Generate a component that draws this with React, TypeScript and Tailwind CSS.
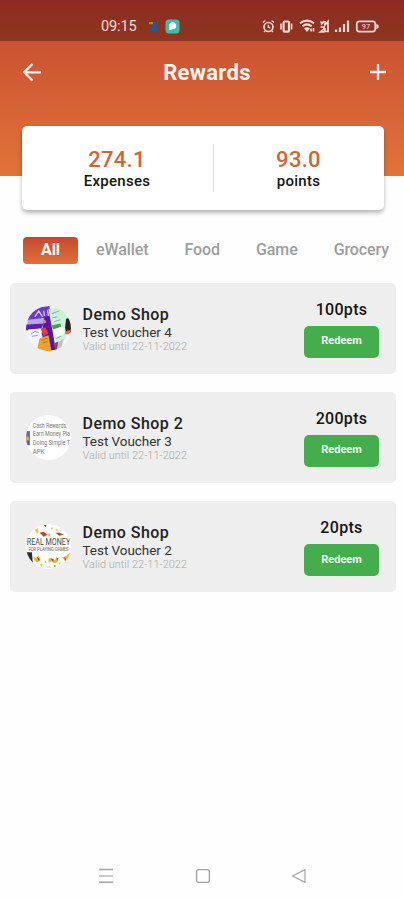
import type { ReactNode } from "react";

interface Reward {
    shop: string;
    voucher: string;
    validUntil: string;
    points: number;
    logo: ReactNode;
}

const categories = ["eWallet", "Food", "Game", "Grocery"];

function FlyerLogo() {
    return (
        <svg viewBox="0 0 46 46" className="size-full">
            <rect width="46" height="46" fill="#f4f6fa" />
            <path d="M4 2L24 0L25 12L1 15Z" fill="#6a3ac4" />
            <path d="M9 11L13 5L17 11M18 5L19 10M22 4L23 10" fill="none" stroke="#d5c5fa" strokeWidth="1.4" />
            <path d="M2 14L20 12L19 18L1 19Z" fill="#b9a6f0" />
            <path d="M0 19L18 18L16 23L0 25Z" fill="#5b1fb4" />
            <path d="M19 11L26 10L30 45L21 46L16 28Z" fill="#541aa7" />
            <path d="M2 24L15 23L14 36L5 38Z" fill="#f5f7ff" />
            <path d="M5 29L9 26L13 27M6 31L12 30" fill="none" stroke="#8f95bd" />
            <path d="M15 23L20 22L23 28L18 31Z" fill="#e5383f" />
            <circle cx="19" cy="16" r="1.6" fill="#f28a2f" />
            <path d="M14 33L23 30L26 46L11 46Z" fill="#f3a02a" />
            <path d="M16 35L22 33M17 38L22 36" stroke="#a8742f" />
            <path d="M23 3L38 1L45 16L40 34L29 36Z" fill="#c9f2d9" />
            <path d="M26 8L34 5M27 12L32 11M29 16L35 14M30 30L37 28M31 33L36 31" stroke="#86b096" />
            <path d="M26 20L35 18L36 21L28 24Z" fill="#4a9f48" />
            <path d="M28 24L38 21L39 29L30 32Z" fill="#f2fdf5" />
            <path d="M41 13L46 12L46 27L41 28L40 22Z" fill="#28201f" />
            <path d="M40 26L46 24L44 29L40 29Z" fill="#e86846" />
            <path d="M29 38L33 36L32 44L30 46Z" fill="#8a4a3a" />
            <path d="M33 37L39 33L36 43L32 45Z" fill="#b9c4c6" />
        </svg>
    );
}

function AppListingLogo() {
    return (
        <svg viewBox="0 0 46 46" className="size-full font-[Roboto,sans-serif]">
            <rect width="46" height="46" fill="#fff" />
            <rect x="0" y="16.5" width="4" height="14.5" fill="#5a6ab0" />
            <rect x="0" y="22" width="3" height="4" fill="#eda143" />
            <g fill="#777" fontSize="7">
                <text x="7" y="12.8" textLength="35" lengthAdjust="spacingAndGlyphs">Cash Rewards,</text>
                <text x="7" y="21.8" textLength="38" lengthAdjust="spacingAndGlyphs">Earn Money Pla</text>
                <text x="7" y="30.8" textLength="38" lengthAdjust="spacingAndGlyphs">Doing Simple T</text>
                <text x="7" y="39.5" textLength="12" lengthAdjust="spacingAndGlyphs">APK</text>
            </g>
        </svg>
    );
}

function RealMoneyLogo() {
    return (
        <svg viewBox="0 0 46 46" className="size-full font-[Roboto,sans-serif]">
            <rect width="46" height="46" fill="#fff" />
            <path d="M9 6l3-2 1 4-2 2zM25 4l3-1-1 3zM30 5l3 1-2 2zM22 11l2-2 1 3-3 1z" fill="#f3c548" />
            <path d="M14 9l4-1 4 3-4 2zM30 9l4 0 5 2-5 1zM18 1l3 0-1 2z" fill="#b5482b" />
            <text x="0.8" y="21.5" textLength="44.4" lengthAdjust="spacingAndGlyphs" fontSize="8.8" fill="#444">REAL MONEY</text>
            <text x="2.5" y="28" textLength="41" lengthAdjust="spacingAndGlyphs" fontSize="4.8" fontWeight="500" fill="#777">FOR PLAYING GAMES</text>
            <path d="M0 29l6 0 1 11-5-5z" fill="#2d2c30" />
            <path d="M7 33l3 2 3-3 2 5-3 2-3-1zM23 35l3 0 3 2 3-2 0 4-3 1-3-2-3 2zM37 34l4-1 4-4-1 7-4 2z" fill="#edb52f" />
            <path d="M11 33l3 3-1 2zM25 35l3 1 0 3zM31 34l2 1-1 3zM19 38l1 0 1 2zM39 33l2 3-1 1zM28 43l2-1 0 2z" fill="#a83926" />
            <path d="M14 41l3 0-1 3zM23 43l3 1-3 1zM33 40l3-1-2 3z" fill="#f5d15b" />
        </svg>
    );
}

const rewards: Reward[] = [
    { shop: "Demo Shop", voucher: "Test Voucher 4", validUntil: "22-11-2022", points: 100, logo: <FlyerLogo /> },
    { shop: "Demo Shop 2", voucher: "Test Voucher 3", validUntil: "22-11-2022", points: 200, logo: <AppListingLogo /> },
    { shop: "Demo Shop", voucher: "Test Voucher 2", validUntil: "22-11-2022", points: 20, logo: <RealMoneyLogo /> },
];

function StatusBar() {
    return (
        <div className="flex h-[41px] items-start bg-linear-to-b from-[#8e2b20] to-[#8f3521] pt-[17px] pl-[101px] text-[#f3dcd6]">
            <span className="h-[19px] w-[47px] text-[14.5px] leading-[20px] tracking-[-0.1px]">09:15</span>
            <svg width="11" height="12" viewBox="0 0 11 12" className="mt-1">
                <path d="M4 1H10V4L7 7H10V10H1V7L5 4Z" fill="#2a5688" />
                <path d="M1 1H5V3.2H1Z" fill="#b07d55" />
            </svg>
            <svg width="15" height="15" viewBox="0 0 15 15" className="mt-[2px] ml-[6px]">
                <rect x="0.5" y="0.5" width="14" height="14" rx="3.5" fill="#3dbda7" />
                <path d="M4 11L4.2 7A3.5 3.5 0 1 1 7.5 10.3Z" fill="#fff" />
            </svg>
            <svg width="118" height="16" viewBox="262 18 118 16" className="mt-px ml-[81px]" fill="none" stroke="currentColor" strokeWidth="1.6">
                <circle cx="269.5" cy="27" r="4.5" />
                <path d="M269.3 24.7V27.2L271.3 28.2M264 22.6L266.4 20.6M275 22.6L272.6 20.6M266 30.8L265 32M273 30.8L274 32" strokeWidth="1.3" />
                <rect x="284.6" y="21.5" width="5.4" height="10.2" rx="1.2" strokeWidth="2.2" />
                <path d="M282 23.5V29.5M292.6 23.5V29.5" />
                <path d="M301 23.3Q308 18 315 23.3M303.4 26.2Q308 22.6 312.6 26.2" strokeWidth="2" />
                <path d="M305 28.4Q308 26 311 28.4L308 32Z" fill="currentColor" stroke="none" />
                <path d="M312 31.5V28.5M314.5 28V31.5" />
                <path d="M321.5 21.5L324 24M325 21L322 24.5M326 21V25L329 21.5V31.5H326V28M321.5 27H325V29L321.5 31.8H325.5" strokeWidth="1.7" />
                <path d="M337 29.5V32M341 27.5V32M345 24V32M349 20.5V32" strokeWidth="2.2" />
                <rect x="357.8" y="21.3" width="18.4" height="10.4" rx="2.6" strokeWidth="1.7" />
                <path d="M377.3 23.5V29.5L379.7 27.6V25.4Z" fill="currentColor" stroke="none" />
                <text x="367" y="29.2" textAnchor="middle" fontSize="7.5" fill="currentColor" stroke="none">97</text>
            </svg>
        </div>
    );
}

function Header() {
    return (
        <header className="h-[176px] bg-linear-to-b from-[#c4482f] to-[#e1733a]">
            <StatusBar />
            <div className="flex items-center justify-between pt-[16px] pr-[17px] pl-[22px] text-[#fff4ee]">
                <svg width="20" height="20" viewBox="0 0 20 20" className="-mt-0.5" fill="none" stroke="currentColor" strokeWidth="2.3">
                    <path d="M19 10.3H2.5M10.5 2L2.2 10.3L10.5 18.6" />
                </svg>
                <h1 className="pl-[3px] text-[22px] leading-8 font-bold tracking-[0.3px]">Rewards</h1>
                <svg width="18" height="18" viewBox="0 0 18 18" className="-mt-0.5" fill="none" stroke="currentColor" strokeWidth="2.3">
                    <path d="M9 1V17M1 9H17" />
                </svg>
            </div>
        </header>
    );
}

function Stat({ value, label }: { value: string; label: string }) {
    return (
        <div className="flex flex-col items-center pt-[3px]">
            <span className="text-[22px] leading-6 font-medium tracking-[0.3px] text-[#d5622f]">{value}</span>
            <span className="text-[15px] leading-[19px] font-medium tracking-[0.3px] text-[#151515]">{label}</span>
        </div>
    );
}

function Summary() {
    return (
        <section className="relative mr-[20.5px] ml-[21.5px] -mt-[50px] grid h-[84px] grid-cols-[191px_1px_170px] items-center rounded-[5px] bg-white shadow-[0_3px_4px_rgba(0,0,0,0.28)]">
            <Stat value="274.1" label="Expenses" />
            <div className="h-12 bg-[#dedede]" />
            <Stat value="93.0" label="points" />
        </section>
    );
}

function CategoryTabs() {
    return (
        <nav className="mt-[27px] flex h-[27px] items-center pl-[23px] text-[16px] font-medium tracking-[-0.1px] text-[#9d9d9d]">
            <button className="mr-[18px] h-[27px] w-[55px] rounded-[4px] bg-linear-to-b from-[#c4482c] to-[#e0703a] pb-0.5 font-bold text-white">All</button>
            <div className="flex w-[293px] justify-between pb-0.5">
                {categories.map((category) => (
                    <button key={category}>{category}</button>
                ))}
            </div>
        </nav>
    );
}

function RewardCard({ reward }: { reward: Reward }) {
    return (
        <li className="flex h-[91px] items-center rounded-[5px] bg-[#eee] pr-[17px] pl-4">
            <div className="size-[45px] shrink-0 overflow-hidden rounded-full">{reward.logo}</div>
            <div className="ml-[11.5px] flex-1 pt-[1.5px]">
                <h2 className="text-[16px] leading-5 font-medium tracking-[0.45px] text-[#222]">{reward.shop}</h2>
                <p className="text-[13.5px] leading-[15px] tracking-[-0.05px] text-[#333]">{reward.voucher}</p>
                <p className="text-[11px] leading-[14px] font-light text-[#aaa]">Valid until {reward.validUntil}</p>
            </div>
            <div className="flex w-[75px] flex-col items-center">
                <span className="text-[16px] leading-5 font-medium tracking-[0.3px] text-[#151515]">{reward.points}pts</span>
                <button className="mt-[6px] h-8 w-full rounded-[5px] bg-[#43ae4b] text-[11px] font-bold text-[#f2fff2]">Redeem</button>
            </div>
        </li>
    );
}

function NavigationBar() {
    return (
        <footer className="mt-auto flex h-12 items-center justify-between pr-[97px] pl-[98px] text-[#a3a3a3]">
            <svg width="16" height="16" viewBox="0 0 16 16" stroke="currentColor" strokeWidth="1.5">
                <path d="M1 1.6H15M1 14.2H15" />
                <path d="M1 8H15" strokeWidth="2" opacity="0.55" />
            </svg>
            <svg width="16" height="16" viewBox="0 0 16 16" fill="none" stroke="currentColor" strokeWidth="1.4">
                <rect x="1.6" y="1.6" width="12.8" height="12.8" rx="2.2" />
            </svg>
            <svg width="16" height="16" viewBox="0 0 16 16" fill="none" stroke="currentColor" strokeWidth="1.2" strokeLinejoin="round">
                <path d="M1.5 8L14 1.6V14.4Z" />
            </svg>
        </footer>
    );
}

export default function App() {
    return (
        <main className="flex h-[900px] w-[404px] flex-col overflow-hidden bg-[#fefefe] font-[Roboto,sans-serif]">
            <Header />
            <Summary />
            <CategoryTabs />
            <ul className="mt-[19px] mr-2 ml-[10px] flex flex-col gap-[18.2px]">
                {rewards.map((reward) => (
                    <RewardCard key={reward.voucher} reward={reward} />
                ))}
            </ul>
            <NavigationBar />
        </main>
    );
}
